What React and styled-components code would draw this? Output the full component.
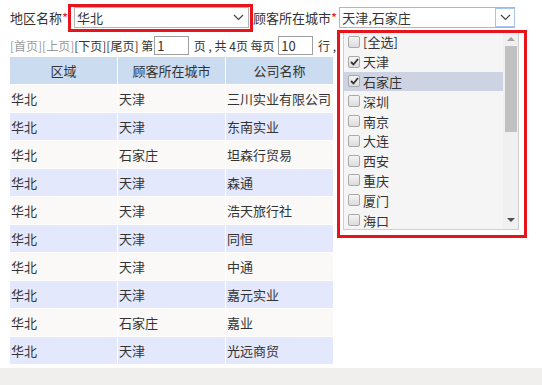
import styled, { createGlobalStyle } from "styled-components";

const GlobalStyle = createGlobalStyle`
  body {
    margin: 0;
    background: #f0efee;
    font-family: "Microsoft YaHei", "Noto Sans CJK SC", sans-serif;
    color: #333;
  }
`;

const cities = ["[全选]", "天津", "石家庄", "深圳", "南京", "大连", "西安", "重庆", "厦门", "海口"];
const checked = ["天津", "石家庄"];

const rows = [
  ["华北", "天津", "三川实业有限公司"],
  ["华北", "天津", "东南实业"],
  ["华北", "石家庄", "坦森行贸易"],
  ["华北", "天津", "森通"],
  ["华北", "天津", "浩天旅行社"],
  ["华北", "天津", "同恒"],
  ["华北", "天津", "中通"],
  ["华北", "天津", "嘉元实业"],
  ["华北", "石家庄", "嘉业"],
  ["华北", "天津", "光远商贸"],
];

const Page = styled.div`
  position: relative;
  background: #fff;
  min-height: 368px;
  padding: 0 10px;
  box-sizing: border-box;
`;

const Toolbar = styled.div`
  display: flex;
  align-items: center;
  padding-top: 2px;
  height: 31px;
`;

const Label = styled.span`
  font-size: 13px;
  white-space: nowrap;
  margin-right: ${(p) => p.$gap || 0}px;
`;

const Star = styled.span`
  color: #e8141c;
`;

const Highlight = styled.div`
  border: 3px solid #e8141c;
  padding: 0 1px 1px 3px;
  display: flex;
`;

const SelectBox = styled.div`
  width: ${(p) => p.$width}px;
  height: 21px;
  box-sizing: border-box;
  border: 1px solid #b5b5b5;
  background: #fff;
  display: flex;
  align-items: center;
  font-size: 13px;
`;

const SelectValue = styled.span`
  flex: 1;
  padding-left: 2px;
  white-space: nowrap;
`;

const Arrow = styled.span`
  width: 20px;
  height: 100%;
  box-sizing: border-box;
  display: flex;
  align-items: center;
  justify-content: center;
  border: ${(p) => (p.$focus ? "1px solid #a7c3ef" : "none")};
  margin-right: ${(p) => (p.$focus ? "-1px" : "0")};
`;

const Pager = styled.div`
  display: flex;
  align-items: center;
  height: 24px;
  font-size: 12px;
  white-space: pre;
`;

const PagerLink = styled.span`
  color: ${(p) => (p.$off ? "#9a9a9a" : "#333")};
`;

const PagerInput = styled.span`
  width: 35px;
  height: 19px;
  box-sizing: border-box;
  border: 1px solid #a0a0a0;
  font-size: 13px;
  line-height: 17px;
  padding-left: 2px;
  margin: 0 2px 0 1px;
`;

const Table = styled.table`
  border-collapse: collapse;
  font-size: 13px;
`;

const Th = styled.th`
  width: 107px;
  height: 27px;
  padding: 0;
  background: #cbdbf0;
  font-weight: normal;
  border: 1px solid #fff;
  border-top: none;
  border-left: none;
`;

const Td = styled.td`
  height: 27px;
  padding: 0 0 0 1px;
  border: 1px solid #fff;
  border-left: none;
  background: ${(p) => (p.$even ? "#e3e8fc" : "#faf9f7")};
  white-space: nowrap;
`;

const Dropdown = styled.div`
  position: absolute;
  left: 337px;
  top: 30px;
  width: 190px;
  height: 208px;
  box-sizing: border-box;
  border: 3px solid #e8141c;
  padding: 0 0 0 3px;
`;

const ListPanel = styled.div`
  width: 176px;
  height: 197px;
  box-sizing: border-box;
  border: 1px solid #cfcfcf;
  border-top: none;
  background: #f5f5f5;
  display: flex;
  overflow: hidden;
`;

const Items = styled.div`
  flex: 1;
  margin-top: -1px;
`;

const Item = styled.div`
  height: 19.8px;
  display: flex;
  align-items: center;
  padding-left: 4px;
  font-size: 13px;
  background: ${(p) => (p.$active ? "#cdd3e2" : "transparent")};
`;

const Box = styled.span`
  width: 12px;
  height: 12px;
  box-sizing: border-box;
  border: 1px solid #a9a9a9;
  border-radius: 2px;
  background: linear-gradient(#f4f4f4, #dcdcdc);
  margin-right: 3px;
  display: flex;
  align-items: center;
  justify-content: center;
`;

const Scrollbar = styled.div`
  width: 15px;
  background: #f0f0f0;
  display: flex;
  flex-direction: column;
  align-items: center;
`;

const ScrollArrow = styled.span`
  width: 0;
  height: 0;
  border-left: 4px solid transparent;
  border-right: 4px solid transparent;
  ${(p) =>
    p.$down
      ? "border-top: 4px solid #505050; margin-top: auto; margin-bottom: 7px;"
      : "border-bottom: 4px solid #a3a3a3; margin-top: 4px;"}
`;

const Thumb = styled.span`
  width: 12px;
  height: 86px;
  background: #c1c1c1;
  margin-top: 5px;
`;

const Chevron = () => (
  <svg width="11" height="7" viewBox="0 0 11 7">
    <path d="M1 1l4.5 4.5L10 1" fill="none" stroke="#444" strokeWidth="1.2" />
  </svg>
);

const Check = () => (
  <svg width="9" height="8" viewBox="0 0 9 8">
    <path d="M1 4l2.5 2.5L8 1" fill="none" stroke="#333" strokeWidth="1.8" />
  </svg>
);

export default function App() {
  return (
    <>
      <GlobalStyle />
      <Page>
        <Toolbar>
          <Label>
            地区名称<Star>*</Star>
          </Label>
          <Highlight>
            <SelectBox $width={175}>
              <SelectValue>华北</SelectValue>
              <Arrow>
                <Chevron />
              </Arrow>
            </SelectBox>
          </Highlight>
          <Label $gap={2}>
            顾客所在城市<Star>*</Star>
          </Label>
          <SelectBox $width={176}>
            <SelectValue>天津,石家庄</SelectValue>
            <Arrow $focus>
              <Chevron />
            </Arrow>
          </SelectBox>
        </Toolbar>

        <Pager>
          <PagerLink $off>[首页][上页]</PagerLink>
          <PagerLink>[下页][尾页]</PagerLink>
          {" 第"}
          <PagerInput>1</PagerInput>
          {" 页 , 共 4页 每页 "}
          <PagerInput>10</PagerInput>
          {" 行 ,"}
        </Pager>

        <Table>
          <thead>
            <tr>
              <Th>区域</Th>
              <Th>顾客所在城市</Th>
              <Th>公司名称</Th>
            </tr>
          </thead>
          <tbody>
            {rows.map((r, i) => (
              <tr key={i}>
                {r.map((c, j) => (
                  <Td key={j} $even={i % 2 === 1}>
                    {c}
                  </Td>
                ))}
              </tr>
            ))}
          </tbody>
        </Table>

        <Dropdown>
          <ListPanel>
            <Items>
              {cities.map((c) => (
                <Item key={c} $active={c === "石家庄"}>
                  <Box>{checked.includes(c) && <Check />}</Box>
                  {c}
                </Item>
              ))}
            </Items>
            <Scrollbar>
              <ScrollArrow />
              <Thumb />
              <ScrollArrow $down />
            </Scrollbar>
          </ListPanel>
        </Dropdown>
      </Page>
    </>
  );
}
